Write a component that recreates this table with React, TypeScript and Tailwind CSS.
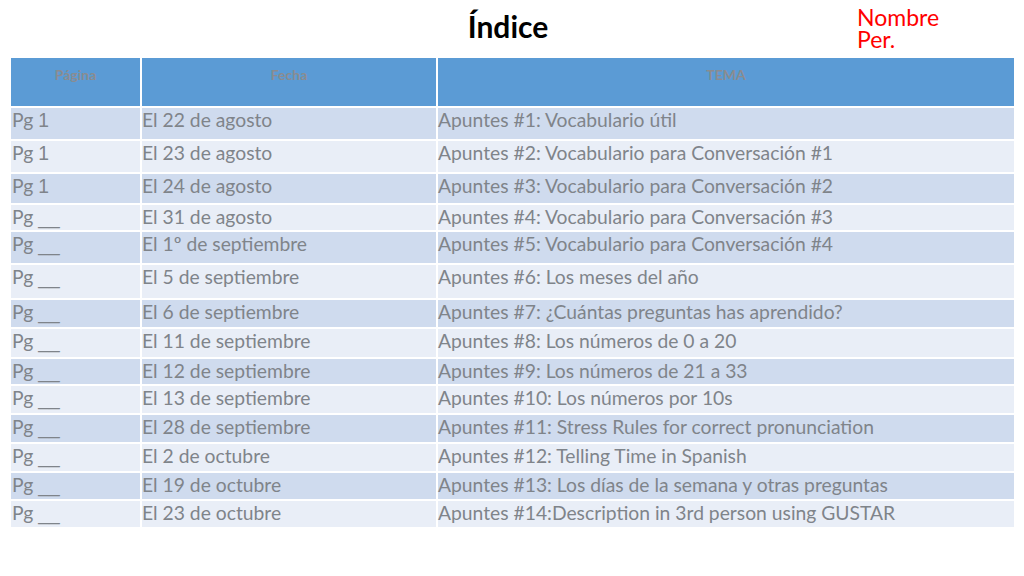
const rows = [
  { pg: "1", fecha: "El 22 de agosto", tema: "Apuntes #1: Vocabulario útil", h: "h-[31px]", dark: true },
  { pg: "1", fecha: "El 23 de agosto", tema: "Apuntes #2: Vocabulario para Conversación #1", h: "h-[31px]", dark: false },
  { pg: "1", fecha: "El 24 de agosto", tema: "Apuntes #3: Vocabulario para Conversación #2", h: "h-[29px]", dark: true },
  { pg: "__", fecha: "El 31 de agosto", tema: "Apuntes #4: Vocabulario para Conversación #3", h: "h-[25px]", dark: false },
  { pg: "__", fecha: "El 1º de septiembre", tema: "Apuntes #5: Vocabulario para Conversación #4", h: "h-[31px]", dark: true },
  { pg: "__", fecha: "El 5 de septiembre", tema: "Apuntes #6: Los meses del año", h: "h-[33px]", dark: false },
  { pg: "__", fecha: "El 6 de septiembre", tema: "Apuntes #7: ¿Cuántas preguntas has aprendido?", h: "h-[27px]", dark: true },
  { pg: "__", fecha: "El 11 de septiembre", tema: "Apuntes #8: Los números de 0 a 20", h: "h-[28px]", dark: false },
  { pg: "__", fecha: "El 12 de septiembre", tema: "Apuntes #9: Los números de 21 a 33", h: "h-[25px]", dark: true },
  { pg: "__", fecha: "El 13 de septiembre", tema: "Apuntes #10: Los números por 10s", h: "h-[27px]", dark: false },
  { pg: "__", fecha: "El 28 de septiembre", tema: "Apuntes #11: Stress Rules for correct pronunciation", h: "h-[27px]", dark: true },
  { pg: "__", fecha: "El 2 de octubre", tema: "Apuntes #12: Telling Time in Spanish", h: "h-[27px]", dark: false },
  { pg: "__", fecha: "El 19 de octubre", tema: "Apuntes #13: Los días de la semana y otras preguntas", h: "h-[26px]", dark: true },
  { pg: "__", fecha: "El 23 de octubre", tema: "Apuntes #14:Description in 3rd person using GUSTAR", h: "h-[26px]", dark: false },
];

export default function App() {
  return (
    <div className="w-[1024px] h-[576px] bg-white overflow-hidden font-['Lato','Open_Sans',sans-serif]">
      {/* TITLE */}
      <div className="flex h-[58px]">
        <div className="w-[857px] pl-[159px] flex justify-center pt-[6px]">
          <h1 className="text-[30px] leading-[40px] font-bold text-black">Índice</h1>
        </div>
        <div className="pt-[6px] text-[23px] leading-[22px] text-[#ff0000]">
          <div>Nombre</div>
          <div>Per.</div>
        </div>
      </div>

      {/* TABLE */}
      <div className="ml-[11px] grid grid-cols-[129px_294px_576px] gap-[2px]">
        <div className="h-[48px] bg-[#5b9bd5] text-center text-[14px] font-bold text-[#8a8c90] pt-[6px]">Página</div>
        <div className="h-[48px] bg-[#5b9bd5] text-center text-[14px] font-bold text-[#8a8c90] pt-[6px]">Fecha</div>
        <div className="h-[48px] bg-[#5b9bd5] text-center text-[14px] font-bold text-[#8a8c90] pt-[6px]">TEMA</div>

        {rows.map((r, i) => (
          <div key={i} className="contents">
            <div className={`${r.h} ${r.dark ? "bg-[#cfdbee]" : "bg-[#e9eef7]"} text-[19.3px] leading-[22px] pt-[1px] pl-[1px] text-[#7f848a] whitespace-nowrap`}>
              Pg <span className="font-['Liberation_Sans',sans-serif]">{r.pg}</span>
            </div>
            <div className={`${r.h} ${r.dark ? "bg-[#cfdbee]" : "bg-[#e9eef7]"} text-[19.3px] leading-[22px] pt-[1px] text-[#7f848a] whitespace-nowrap`}>
              {r.fecha}
            </div>
            <div className={`${r.h} ${r.dark ? "bg-[#cfdbee]" : "bg-[#e9eef7]"} text-[19.3px] leading-[22px] pt-[1px] text-[#7f848a] whitespace-nowrap`}>
              {r.tema}
            </div>
          </div>
        ))}
      </div>
    </div>
  );
}
